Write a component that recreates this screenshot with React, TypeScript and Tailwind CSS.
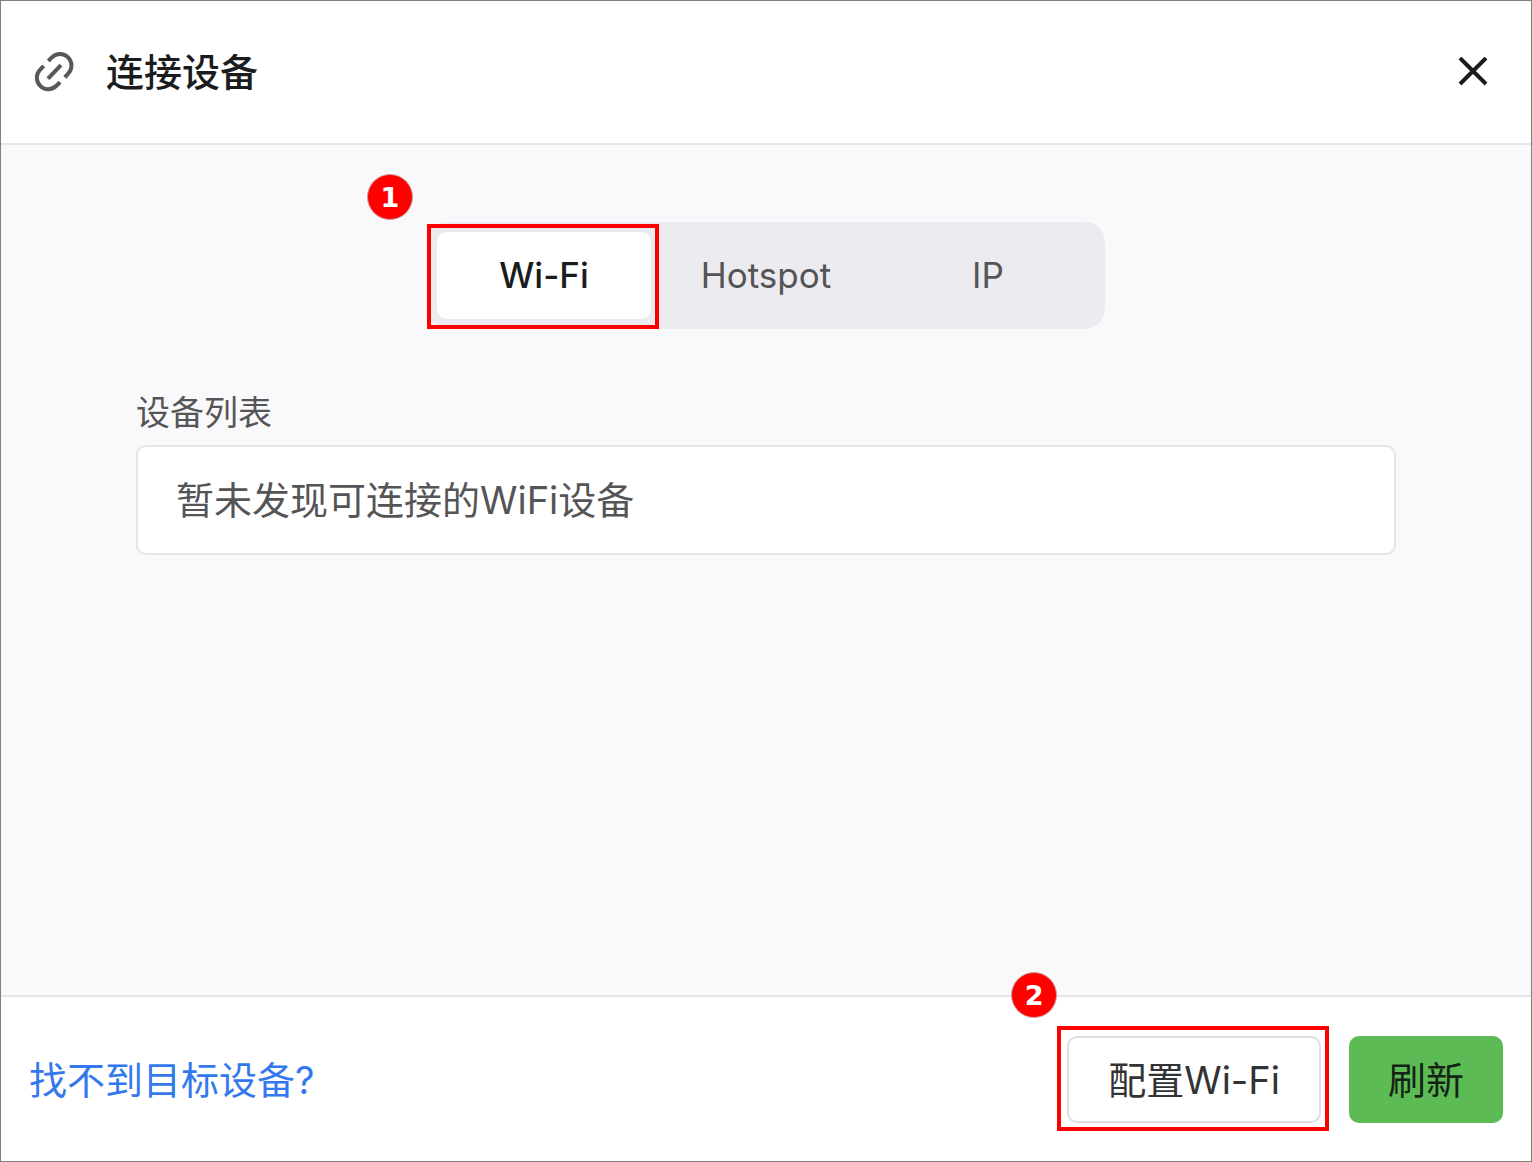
import type { ReactNode } from 'react';

function LinkIcon() {
  return (
    <svg viewBox="0 0 40 40" className="size-10" fill="none" stroke="#58585a" strokeWidth="4" aria-hidden="true">
      <path d="M14.3 9 17.9 5.4A11.45 11.45 0 0 1 34.1 21.6L30.9 25.4" />
      <path d="M26.1 30.2 22.4 33.8A11.45 11.45 0 0 1 6.2 17.6L9.7 13.8" />
      <path d="M14 26.6 27 13.2" />
    </svg>
  );
}

function CloseIcon() {
  return (
    <svg viewBox="0 0 30 30" className="size-[30px]" fill="none" stroke="#1b1c1e" strokeWidth="4" aria-hidden="true">
      <path d="M2 1 28 27M28 1 2 27" />
    </svg>
  );
}

function StepBadge({ children }: { children: ReactNode }) {
  return (
    <span className="flex size-[46px] items-center justify-center rounded-full border border-[#c9a0a0] bg-[#ff0000] font-['DejaVu_Sans'] text-[27px] leading-none font-bold text-white">
      {children}
    </span>
  );
}

export default function App() {
  return (
    <div className="flex min-h-screen flex-col border border-[#808080] bg-white font-['Inter','Noto_Sans_CJK_SC',sans-serif] text-[38px] leading-[56px] text-[#555557]">
      <header className="flex items-center border-b-2 border-[#e6e6e8] py-[43px] pr-[43px] pl-[33px]">
        <LinkIcon />
        <h1 className="ml-8 font-medium text-[#1b1c1e]">连接设备</h1>
        <button type="button" aria-label="关闭" className="ml-auto">
          <CloseIcon />
        </button>
      </header>

      <main className="flex flex-1 flex-col bg-[#f9f9fc] px-[135px] pt-[77px]">
        <div role="tablist" className="mx-auto grid w-full max-w-[678px] grid-cols-3 gap-2 rounded-[20px] bg-[#ecebf0] p-2.5 text-[35px]">
          <div className="relative">
            <button type="button" role="tab" aria-selected="true" className="h-[87px] w-full rounded-[10px] bg-white pb-0.5 font-medium text-[#1b1c1e]">
              Wi-Fi
            </button>
            <div className="pointer-events-none absolute -top-2 -right-2 -bottom-2.5 -left-2.5 border-4 border-[#ff0000]" />
            <div className="absolute -top-[58px] -left-[70px]">
              <StepBadge>1</StepBadge>
            </div>
          </div>
          <button type="button" role="tab" aria-selected="false" className="pb-0.5">
            Hotspot
          </button>
          <button type="button" role="tab" aria-selected="false" className="pb-0.5">
            IP
          </button>
        </div>

        <section className="mt-14">
          <h2 className="text-[34px]">设备列表</h2>
          <div className="mt-1 rounded-[10px] border-2 border-[#e5e5e8] bg-white px-[38px] py-[25px]">
            暂未发现可连接的WiFi设备
          </div>
        </section>
      </main>

      <footer className="flex items-center border-t-2 border-[#e6e6e8] px-7 pt-[39px] pb-[38px]">
        <a href="#help" className="text-[#3478ee]">
          找不到目标设备?
        </a>
        <div className="relative ml-auto">
          <button type="button" className="block h-[87px] rounded-[10px] border-2 border-[#dedee0] bg-white px-[39px] text-[#333335]">
            配置Wi-Fi
          </button>
          <div className="pointer-events-none absolute -top-2.5 -right-2 -bottom-2 -left-2.5 border-4 border-[#ff0000]" />
          <div className="absolute -top-16 -left-14">
            <StepBadge>2</StepBadge>
          </div>
        </div>
        <button type="button" className="ml-7 h-[87px] rounded-[10px] bg-[#5dbb55] px-[39px] text-[#142414]">
          刷新
        </button>
      </footer>
    </div>
  );
}
